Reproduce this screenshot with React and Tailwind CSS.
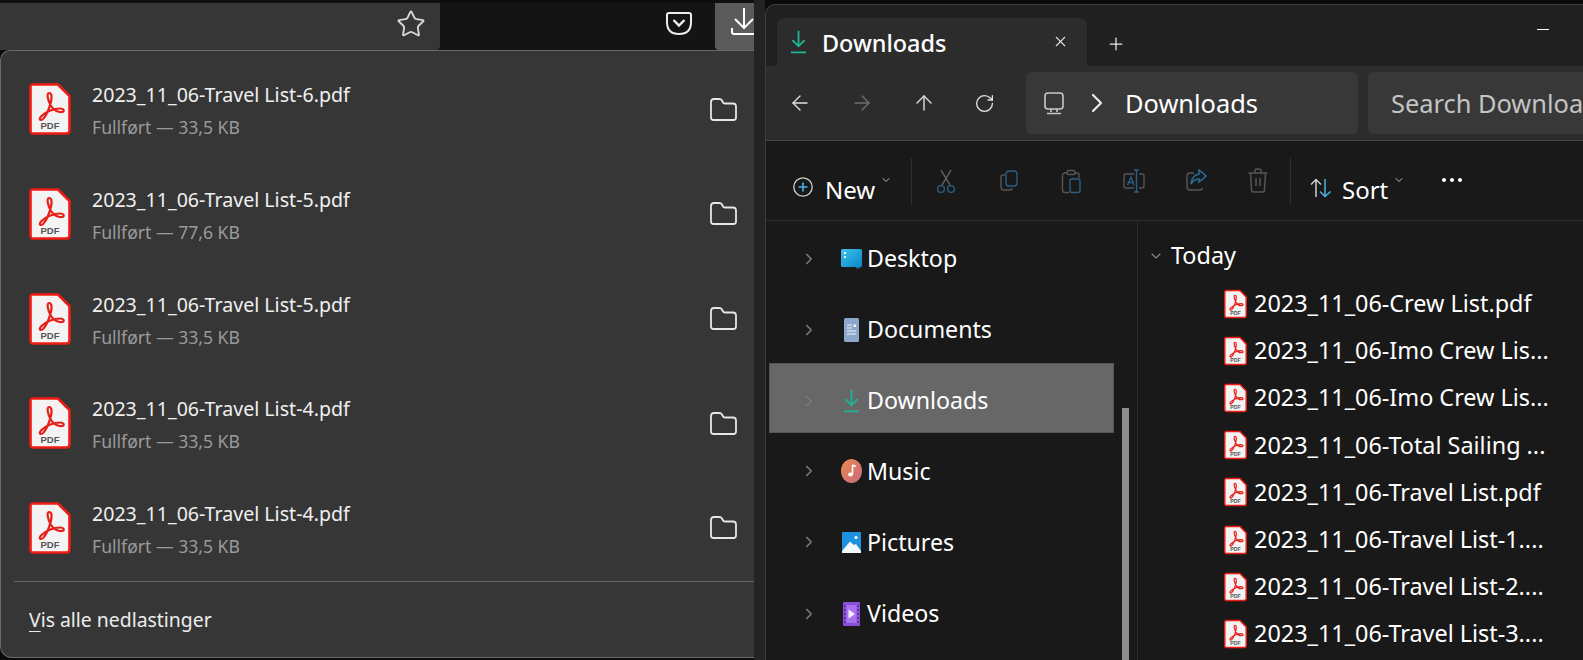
import { ArrowLeft, ArrowRight, ArrowUp, RotateCw, ChevronRight, ChevronDown, X, Plus, Star } from 'lucide-react';

const DOWNLOADS = [
  { name: '2023_11_06-Travel List-6.pdf', size: '33,5 KB' },
  { name: '2023_11_06-Travel List-5.pdf', size: '77,6 KB' },
  { name: '2023_11_06-Travel List-5.pdf', size: '33,5 KB' },
  { name: '2023_11_06-Travel List-4.pdf', size: '33,5 KB' },
  { name: '2023_11_06-Travel List-4.pdf', size: '33,5 KB' },
];

const FILES = [
  '2023_11_06-Crew List.pdf',
  '2023_11_06-Imo Crew Lis...',
  '2023_11_06-Imo Crew Lis...',
  '2023_11_06-Total Sailing ...',
  '2023_11_06-Travel List.pdf',
  '2023_11_06-Travel List-1....',
  '2023_11_06-Travel List-2....',
  '2023_11_06-Travel List-3....',
];

function PdfIcon({ className }) {
  return (
    <svg viewBox="0 0 42 52" className={className}>
      <path d="M4 1.5H29L40.5 13V47.5Q40.5 50.5 37.5 50.5H4Q1.5 50.5 1.5 47.5V4Q1.5 1.5 4 1.5Z" fill="#f3f3f3" stroke="#f01c14" strokeWidth="2.6" />
      <path d="M20 10C17.5 10 18.5 17 22 23C25 28 30 29.5 33 29C36 28.5 35 25.5 31 25.5C25 25.5 16 29 12 33.5C9.5 36.5 11.5 38 14 36C18 32.5 23 19 22.5 13C22.3 11 21.5 10 20 10Z" fill="none" stroke="#e8201a" strokeWidth="2.2" />
      <text x="21" y="46" textAnchor="middle" fontSize="9.5" fontWeight="700" fill="#555" fontFamily="Liberation Sans, sans-serif">PDF</text>
    </svg>
  );
}

function FolderIcon() {
  return (
    <svg viewBox="0 0 27 23" className="h-[23px] w-[27px]" fill="none" stroke="#e6e6e6" strokeWidth="1.8">
      <path d="M1 4Q1 1 4 1H9.5Q11 1 12 2.5L13 4.5Q13.5 5.5 15 5.5H23Q26 5.5 26 8.5V19.5Q26 22 23.5 22H3.5Q1 22 1 19.5Z" strokeLinejoin="round" />
    </svg>
  );
}

function GreenDownload({ className }) {
  return (
    <svg viewBox="0 0 16 24" className={className} fill="none" stroke="#1fb394" strokeWidth="2">
      <path d="M8 0V16M1.5 10L8 16.5L14.5 10M0 23H16" />
    </svg>
  );
}

function Chevron() {
  return <ChevronRight className="h-[18px] w-[18px] text-[#7a7a7a]" strokeWidth={2.2} />;
}

function DesktopIcon() {
  return (
    <svg viewBox="0 0 21 20" className="h-5 w-[21px]">
      <defs>
        <linearGradient id="desk" x1="0" y1="0" x2="1" y2="1">
          <stop offset="0" stopColor="#3cc4ee" />
          <stop offset="1" stopColor="#0a86c8" />
        </linearGradient>
      </defs>
      <rect x="0" y="0" width="21" height="18" rx="1.5" fill="url(#desk)" />
      <rect x="15" y="18" width="4" height="1.5" fill="#0a6d9f" />
      <rect x="3" y="3" width="2" height="2" fill="#fff" />
      <rect x="3" y="7" width="2" height="2" fill="#dff" />
    </svg>
  );
}

function DocumentsIcon() {
  return (
    <svg viewBox="0 0 15 24" className="h-6 w-[15px]">
      <rect width="15" height="24" rx="1.5" fill="#8ba7c9" />
      <path d="M3 7H8M3 10H8M3 13H12M3 16H12" stroke="#f2f5fa" strokeWidth="1" />
      <rect x="9.5" y="6.5" width="2.5" height="2.5" fill="#f2f5fa" />
    </svg>
  );
}

function MusicIcon() {
  return (
    <svg viewBox="0 0 21 24" className="h-6 w-[21px]">
      <defs>
        <linearGradient id="mus" x1="0" y1="0" x2="1" y2="1">
          <stop offset="0" stopColor="#ea8a4f" />
          <stop offset="1" stopColor="#c8687e" />
        </linearGradient>
      </defs>
      <ellipse cx="10.5" cy="12" rx="10.5" ry="12" fill="url(#mus)" />
      <path d="M11.5 6V15" stroke="#fff" strokeWidth="1.6" />
      <path d="M11.5 6L15 7.5" stroke="#fff" strokeWidth="1.6" />
      <ellipse cx="9.5" cy="15.5" rx="2.4" ry="2" fill="#fff" />
    </svg>
  );
}

function PicturesIcon() {
  return (
    <svg viewBox="0 0 19 21" className="h-[21px] w-[19px]">
      <rect width="19" height="21" rx="1" fill="#1a92e0" />
      <circle cx="14" cy="5.5" r="1.6" fill="#fff" />
      <path d="M0 19L8 9.5L12 13L14 12L19 19V21H0Z" fill="#f4f8fb" />
    </svg>
  );
}

function VideosIcon() {
  return (
    <svg viewBox="0 0 17 24" className="h-6 w-[17px]">
      <rect width="17" height="24" rx="1" fill="#8a4fd8" />
      <rect x="3.5" y="3" width="10" height="18" fill="#a874ee" />
      <path d="M1 4H2.5M1 8H2.5M1 12H2.5M1 16H2.5M1 20H2.5M14.5 4H16M14.5 8H16M14.5 12H16M14.5 16H16M14.5 20H16" stroke="#3d1c78" strokeWidth="1.6" />
      <path d="M5.5 7.5L12 12L5.5 16.5Z" fill="#f3ecff" />
    </svg>
  );
}

const PLACES = [
  { label: 'Desktop', icon: <DesktopIcon /> },
  { label: 'Documents', icon: <DocumentsIcon /> },
  { label: 'Downloads', icon: <GreenDownload className="h-6 w-[15px]" />, selected: true },
  { label: 'Music', icon: <MusicIcon /> },
  { label: 'Pictures', icon: <PicturesIcon /> },
  { label: 'Videos', icon: <VideosIcon /> },
];

function Toolbar() {
  return (
    <div className="flex h-[50px] shrink-0 bg-[#0f0f0f] pt-[3px]">
      <div className="flex w-[440px] items-start justify-end rounded-br-[4px] bg-[#363636] pr-[14px] pt-[6px]">
        <Star className="h-[30px] w-[30px] text-[#d8d8d8]" strokeWidth={1.5} />
      </div>
      <div className="flex flex-1 items-start justify-end bg-[#141414] pr-[23px] pt-[9px]">
        <svg viewBox="0 0 26 23" className="h-[23px] w-[26px]" fill="none" stroke="#eeeeee" strokeWidth="2">
          <path d="M3 1H23Q25 1 25 3V10Q25 22 13 22Q1 22 1 10V3Q1 1 3 1Z" />
          <path d="M7.5 8L13 13.5L18.5 8" strokeWidth="2.4" />
        </svg>
      </div>
      <div className="w-[39px] overflow-hidden rounded-bl-[4px] bg-[#5a5a5a] pl-4 pt-[5px]">
        <svg viewBox="0 0 26 27" className="h-[27px] w-[26px] max-w-none" fill="none" stroke="#ffffff" strokeWidth="2">
          <path d="M13 0V19M4 11L13 20L22 11M1 20V24Q1 26 3 26H23Q25 26 25 24V20" />
        </svg>
      </div>
    </div>
  );
}

function DownloadsPanel() {
  return (
    <div className="flex h-[608px] flex-col rounded-bl-[12px] rounded-tl-[10px] border-t border-l border-b border-[#6a6a6a] bg-[#363636] pt-[6px]">
      {DOWNLOADS.map((d, i) => (
        <div key={i} className="flex h-[104.67px] items-center pl-[28px] pr-[17px]">
          <PdfIcon className="h-[52px] w-[42px] shrink-0" />
          <div className="ml-[21px] mt-[2px] flex-1">
            <div className="text-[19.6px] leading-[24px] text-[#f0f0f0]">{d.name}</div>
            <div className="mt-[10px] text-[17.6px] leading-[20px] text-[#9a9a9a]">Fullført — {d.size}</div>
          </div>
          <FolderIcon />
        </div>
      ))}
      <div className="ml-[13px] mt-[1px] h-px bg-[#666666]" />
      <div className="flex flex-1 items-center pl-[28px] pb-[1px] text-[19.4px] text-[#ececec]">
        <span><span className="underline underline-offset-4">V</span>is alle nedlastinger</span>
      </div>
    </div>
  );
}

function CommandIcon({ children, className }) {
  return (
    <svg viewBox="0 0 20 24" className={className} fill="none" strokeWidth="1.4">
      {children}
    </svg>
  );
}

function CommandBar() {
  return (
    <div className="flex h-[80px] shrink-0 items-center border-b border-[#2f2f2f] bg-[#191919] text-[24px] text-white">
      <svg viewBox="0 0 20 20" className="ml-[27px] mt-[12px] h-5 w-5" fill="none">
        <circle cx="10" cy="10" r="9.2" stroke="#cfcfcf" strokeWidth="1.3" />
        <path d="M10 5.5V14.5M5.5 10H14.5" stroke="#4bb3ea" strokeWidth="1.6" />
      </svg>
      <span className="ml-[12px] mt-[18px] w-[48px]">New</span>
      <ChevronDown className="ml-[7px] mb-[2px] h-[12px] w-[12px] text-[#bbbbbb]" />
      <div className="ml-[19px] h-[46px] w-px bg-[#2f2f2f]" />
      <CommandIcon className="ml-[24px] h-[26px] w-5">
        <path d="M5 1L14 16M15 1L6 16" stroke="#666" />
        <circle cx="5" cy="20" r="3.4" stroke="#2a5f86" />
        <circle cx="15" cy="20" r="3.4" stroke="#2a5f86" />
      </CommandIcon>
      <CommandIcon className="ml-[43px] h-[24px] w-5">
        <rect x="7" y="2" width="11" height="15" rx="3" stroke="#2a5f86" />
        <path d="M6 6H4Q2 6 2 8V18Q2 21 5 21H11Q13 21 13 19" stroke="#555" />
      </CommandIcon>
      <CommandIcon className="ml-[42px] h-[26px] w-5">
        <path d="M7 4H4Q1.5 4 1.5 6.5V21Q1.5 23.5 4 23.5H8M13 4H16Q18 4 18 6V9" stroke="#555" />
        <rect x="6" y="1.5" width="8" height="4" rx="1.5" stroke="#555" />
        <rect x="9" y="10" width="10" height="13.5" rx="2" stroke="#2a5f86" />
      </CommandIcon>
      <svg viewBox="0 0 22 24" className="ml-[42px] h-[26px] w-[22px]" fill="none" strokeWidth="1.4">
        <path d="M11 5H3Q1 5 1 7V17Q1 19 3 19H11M16 5H19Q21 5 21 7V17Q21 19 19 19H16" stroke="#555" />
        <path d="M13.5 1V23M11 1H16M11 23H16" stroke="#2a5f86" />
        <path d="M4.5 16L8 8L11 16M5.5 13.5H10" stroke="#2a5f86" />
      </svg>
      <svg viewBox="0 0 21 23" className="ml-[41px] h-[23px] w-[21px]" fill="none" strokeWidth="1.5">
        <path d="M8 4H4Q1 4 1 7V18Q1 21 4 21H14Q16 21 16.5 19" stroke="#555" />
        <path d="M13 1L20 7L13 13V10Q8 10 5 15Q6 6 13 5Z" stroke="#2a6b97" />
      </svg>
      <svg viewBox="0 0 20 25" className="ml-[41px] h-[25px] w-[20px]" fill="none" stroke="#555" strokeWidth="1.5">
        <path d="M0.5 5H19.5M7 5V3Q7 1 9 1H11Q13 1 13 3V5M2.5 5L3.5 22Q3.5 24 5.5 24H14.5Q16.5 24 16.5 22L17.5 5M8 10V18M12 10V18" />
      </svg>
      <div className="ml-[22px] h-[46px] w-px bg-[#2f2f2f]" />
      <svg viewBox="0 0 22 20" className="ml-[19px] mt-[14px] h-5 w-[22px]" fill="none" strokeWidth="1.5">
        <path d="M6 19V1.5M1 6.5L6 1.5L11 6.5" stroke="#cfcfcf" />
        <path d="M15 1V18.5M10 13.5L15 18.5L20.5 13.5" stroke="#4bb3ea" />
      </svg>
      <span className="ml-[10px] mt-[18px] w-[44px]">Sort</span>
      <ChevronDown className="ml-[7px] mb-[2px] h-[12px] w-[12px] text-[#bbbbbb]" />
      <div className="ml-[37px] mb-[1px] flex gap-1">
        <span className="h-1 w-1 rounded-full bg-white" />
        <span className="h-1 w-1 rounded-full bg-white" />
        <span className="h-1 w-1 rounded-full bg-white" />
      </div>
    </div>
  );
}

function Explorer() {
  return (
    <div className="mt-1 flex min-w-0 flex-1 flex-col overflow-hidden rounded-tl-[10px] border-t border-l border-[#3d3d3d] bg-[#202020] text-white">
      <div className="flex h-[61px] shrink-0 items-end pl-[11px]">
        <div className="flex h-[48px] w-[310px] items-center rounded-t-[8px] bg-[#2c2c2c] pl-[14px]">
          <GreenDownload className="h-[24px] w-[15px]" />
          <span className="ml-[16px] mt-[4px] text-[23.4px] font-medium">Downloads</span>
          <X className="ml-auto mr-[18px] mb-[1px] h-[17px] w-[17px] text-[#dddddd]" strokeWidth={1.5} />
        </div>
        <Plus className="mb-[12px] ml-[19px] h-[20px] w-[20px] text-[#e8e8e8]" strokeWidth={1.5} />
        <div className="mb-[36px] ml-auto mr-[34px] h-px w-[12px] bg-white" />
      </div>
      <div className="flex h-[75px] shrink-0 items-center border-b border-[#444444] bg-[#2c2c2c] text-[25.4px]">
        <div className="ml-[22px] flex items-center gap-[38px]">
          <ArrowLeft className="h-6 w-6 text-[#e0e0e0]" strokeWidth={1.4} />
          <ArrowRight className="h-6 w-6 text-[#6f6f6f]" strokeWidth={1.4} />
          <ArrowUp className="h-6 w-6 text-[#e0e0e0]" strokeWidth={1.4} />
          <RotateCw className="h-[21px] w-[21px] text-[#e0e0e0]" strokeWidth={1.5} />
        </div>
        <div className="ml-[31px] flex h-[62px] w-[332px] items-center rounded-[6px] bg-[#383838] pl-[18px]">
          <svg viewBox="0 0 20 23" className="h-[23px] w-5" fill="none" stroke="#c8c8c8" strokeWidth="1.6">
            <rect x="1" y="1" width="18" height="16" rx="3" />
            <path d="M7 17V20M13 17V20M3 21.5H17" />
          </svg>
          <ChevronRight className="ml-[17px] h-8 w-8 text-[#ececec]" strokeWidth={1.6} />
          <span className="ml-[12px]">Downloads</span>
        </div>
        <div className="ml-[10px] flex h-[62px] flex-1 items-center overflow-hidden rounded-l-[6px] bg-[#383838] pl-[23px] text-[#c4c4c4]">
          <span className="whitespace-nowrap">Search Downloads</span>
        </div>
      </div>
      <CommandBar />
      <div className="flex min-h-0 flex-1 bg-[#191919]">
        <div className="flex w-[372px] shrink-0 border-r border-[#2c2c2c]">
          <div className="w-[348px] shrink-0 pl-[3px] pt-[2px] text-[23.2px]">
            {PLACES.map((p) => (
              <div
                key={p.label}
                className={`flex items-center ${p.selected ? '-mt-[2px] mb-[2.2px] h-[70px] border border-[#555555] bg-[#676767] pl-[30px] pt-[5px]' : 'h-[71.2px] pl-[31px]'}`}
              >
                <Chevron />
                <div className="ml-[20px] flex w-[27px] justify-center">{p.icon}</div>
                <span className="ml-[2px]">{p.label}</span>
              </div>
            ))}
          </div>
          <div className="ml-[8px] mt-[187px] w-[7px] bg-[#8f8f8f]" />
        </div>
        <div className="min-w-0 flex-1 pt-[16px] text-[23.4px]">
          <div className="flex h-[38px] items-center pl-[10px]">
            <ChevronDown className="h-[16px] w-[16px] text-[#8a8a8a]" strokeWidth={1.6} />
            <span className="ml-[7px]">Today</span>
          </div>
          <div className="mt-[5px] pl-[86px]">
            {FILES.map((f, i) => (
              <div key={i} className="flex h-[47.2px] items-center">
                <PdfIcon className="h-[30px] w-[23px] shrink-0" />
                <span className="ml-[7px] whitespace-nowrap">{f}</span>
              </div>
            ))}
          </div>
        </div>
      </div>
    </div>
  );
}

export default function App() {
  return (
    <div className="flex h-[660px] w-[1583px] overflow-hidden bg-[#0b0b0b] font-['Noto_Sans',sans-serif]">
      <div className="flex w-[754px] shrink-0 flex-col">
        <Toolbar />
        <DownloadsPanel />
      </div>
      <div className="w-[11px] shrink-0 bg-[#232323]" />
      <Explorer />
    </div>
  );
}
